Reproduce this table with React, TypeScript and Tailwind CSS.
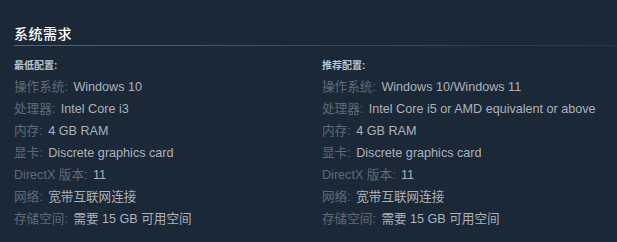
const MIN = [
  ["操作系统:", "Windows 10"],
  ["处理器:", "Intel Core i3"],
  ["内存:", "4 GB RAM"],
  ["显卡:", "Discrete graphics card"],
  ["DirectX 版本:", "11"],
  ["网络:", "宽带互联网连接"],
  ["存储空间:", "需要 15 GB 可用空间"],
];

const REC = [
  ["操作系统:", "Windows 10/Windows 11"],
  ["处理器:", "Intel Core i5 or AMD equivalent or above"],
  ["内存:", "4 GB RAM"],
  ["显卡:", "Discrete graphics card"],
  ["DirectX 版本:", "11"],
  ["网络:", "宽带互联网连接"],
  ["存储空间:", "需要 15 GB 可用空间"],
];

function Column({ title, rows }: { title: string; rows: string[][] }) {
  return (
    <div>
      <div className="mb-[2px] text-[10px] font-bold leading-[16px] text-[#b9c5cf]">{title}</div>
      <ul>
        {rows.map(([k, v]) => (
          <li key={k} className="whitespace-nowrap text-[12.6px] leading-[22px]">
            <span className="mr-[2px] text-[#5f6b76]">{k}</span>{" "}
            <span className="text-[#acb2b8]">{v}</span>
          </li>
        ))}
      </ul>
    </div>
  );
}

export default function App() {
  return (
    <main
      className="h-[242px] w-[617px] overflow-hidden bg-[#1b2838] pl-[14px]"
      style={{ fontFamily: '"Liberation Sans", "Noto Sans CJK SC", sans-serif' }}
    >
      <h2 className="pt-[25px] pb-[2px] text-[14px] font-medium leading-[18px] tracking-[0.5px] text-white">系统需求</h2>
      <div className="h-px bg-gradient-to-r from-[#3d6d8d] to-[#22364a]" />
      <div className="mt-[12px] grid grid-cols-[308px_1fr]">
        <Column title="最低配置:" rows={MIN} />
        <Column title="推荐配置:" rows={REC} />
      </div>
    </main>
  );
}
